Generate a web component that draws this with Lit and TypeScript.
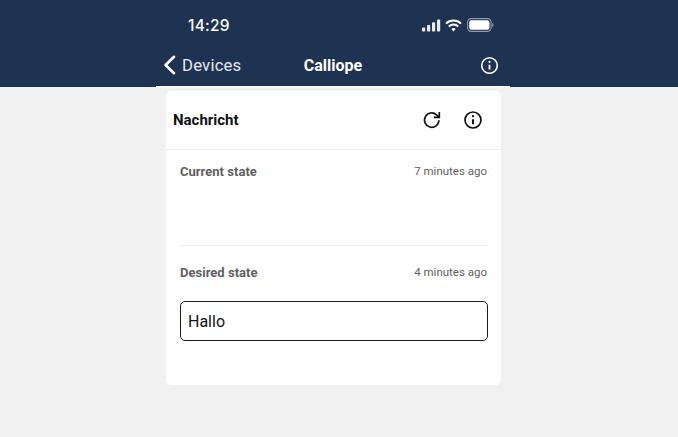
import { LitElement, html, css } from "lit";
import { customElement } from "lit/decorators.js";

const info = (size: number) => html`<svg width=${size} height=${size} viewBox="0 0 20 20" fill="none" stroke="currentColor">
  <circle cx="10" cy="10" r="8.2" stroke-width="1.7"></circle>
  <path d="M10 9.2v5" stroke-width="2" ></path>
  <circle cx="10" cy="6.2" r="1.15" fill="currentColor" stroke="none"></circle>
</svg>`;

@customElement("app-root")
export class AppRoot extends LitElement {
  static styles = css`
    :host { display: block; width: 678px; height: 437px; background: #f1f1f1; font-family: Roboto, sans-serif; overflow: hidden; }
    .header { background: #1e3251; height: 87px; padding-left: 156px; }
    .phone { width: 354px; height: 86px; color: #fff; display: flex; flex-direction: column; }
    .status { height: 45px; flex: none; display: flex; align-items: center; justify-content: space-between; padding: 5px 16px 0 32px; box-sizing: border-box; }
    .time { font-family: Inter, sans-serif; font-size: 15.5px; font-weight: 500; letter-spacing: 0.2px; }
    .sys { display: flex; align-items: center; gap: 4px; }
    .nav { flex: 1; display: grid; grid-template-columns: 1fr auto 1fr; align-items: center; padding: 0 11px 1px; }
    .back { display: flex; align-items: center; gap: 6px; margin-left: -4px; font-size: 16.7px; color: #e4e8ee; letter-spacing: 0.2px; }
    .title { font-size: 16px; font-weight: 700; }
    .navinfo { justify-self: end; display: flex; }
    .rule { width: 354px; height: 1px; background: #fff; }
    .rule2 { width: 354px; height: 1px; background: #f7f6f9; margin-left: 156px; }
    .card { width: 335px; height: 294px; margin: 3px 0 0 166px; background: #fff; border-radius: 5px; box-sizing: border-box; }
    .cardhead { height: 58px; display: flex; align-items: center; padding: 0 18px 0 7px; border-bottom: 1px solid #ececec; gap: 21px; color: #111; }
    .cardhead h1 { margin: 0; font-size: 15px; font-weight: 700; flex: 1; }
    .cardhead svg { display: block; }
    .body { padding: 0 13px 0 14px; }
    .section { height: 96px; padding-top: 13px; box-sizing: border-box; border-bottom: 1px solid #ececec; }
    .section.last { border: 0; padding-top: 18px; height: auto; }
    .row { display: flex; justify-content: space-between; align-items: center; height: 16px; padding-right: 1px; }
    .label { font-size: 13px; font-weight: 700; color: #5f5f5f; letter-spacing: 0.02px; }
    .ago { font-size: 11.5px; color: #5f5f5f; }
    .input { margin-top: 21px; height: 40px; border: 1px solid #1a1a1a; border-radius: 5px; box-sizing: border-box; display: flex; align-items: center; padding-left: 7px; font-size: 16px; color: #111; background: #fff; }
  `;

  render() {
    return html`
      <div class="header">
        <div class="phone">
          <div class="status">
            <span class="time">14:29</span>
            <div class="sys">
              <svg width="19" height="13" viewBox="0 0 19 13" fill="#e8ebf0"><rect x="0" y="8.5" width="3.2" height="4" rx=".8"></rect><rect x="5" y="6" width="3.2" height="6.5" rx=".8"></rect><rect x="10" y="3.2" width="3.2" height="9.3" rx=".8"></rect><rect x="15" y="0.5" width="3.2" height="12" rx=".8"></rect></svg>
              <svg width="17" height="13" viewBox="0 0 17 13" fill="none" stroke="#fff" stroke-width="2"><path d="M1 4.6a10.8 10.8 0 0 1 15 0"></path><path d="M3.8 7.5a6.8 6.8 0 0 1 9.4 0"></path><path d="M8.5 12.4 6.4 10.1a3 3 0 0 1 4.2 0z" fill="#fff" stroke="none"></path></svg>
              <svg width="27" height="14" viewBox="0 0 27 14" style="margin-left:1px"><rect x=".6" y=".6" width="23.5" height="12.8" rx="3.6" fill="none" stroke="#8d98a9" stroke-width="1.1"></rect><rect x="2.2" y="2.2" width="20.3" height="9.6" rx="2.2" fill="#fff"></rect><path d="M25.2 5v4c.9-.3 1.4-1.1 1.4-2s-.5-1.700-1.400-2z" fill="#8d98a9"></path></svg>
            </div>
          </div>
          <div class="nav">
            <div class="back">
              <svg width="13" height="20" viewBox="0 0 13 20" fill="none" stroke="#fff" stroke-width="2.6" stroke-linecap="round" stroke-linejoin="round"><path d="M11 1.800 2.600 10 11 18.200"></path></svg>
              <span>Devices</span>
            </div>
            <div class="title">Calliope</div>
            <div class="navinfo">${info(19)}</div>
          </div>
        </div>
        <div class="rule"></div>
      </div>
      <div class="rule2"></div>
      <div class="card">
        <div class="cardhead">
          <h1>Nachricht</h1>
          <svg width="20" height="20" viewBox="0 0 20 20" fill="none" stroke="currentColor" stroke-width="1.700"><path d="M16.900 10.200a7.200 7.200 0 1 1-2.300-5.400L17.200 7.300"></path><path d="M17.300 1.900v5.500h-5.500"></path></svg>
          <svg width="20" height="20" viewBox="0 0 20 20" fill="none" stroke="currentColor"><circle cx="10" cy="10" r="8" stroke-width="1.700"></circle><path d="M10 9.200v5" stroke-width="2"></path><circle cx="10" cy="6.200" r="1.150" fill="currentColor" stroke="none"></circle></svg>
        </div>
        <div class="body">
          <div class="section">
            <div class="row"><span class="label">Current state</span><span class="ago">7 minutes ago</span></div>
          </div>
          <div class="section last">
            <div class="row"><span class="label">Desired state</span><span class="ago">4 minutes ago</span></div>
            <div class="input">Hallo</div>
          </div>
        </div>
      </div>
    `;
  }
}
